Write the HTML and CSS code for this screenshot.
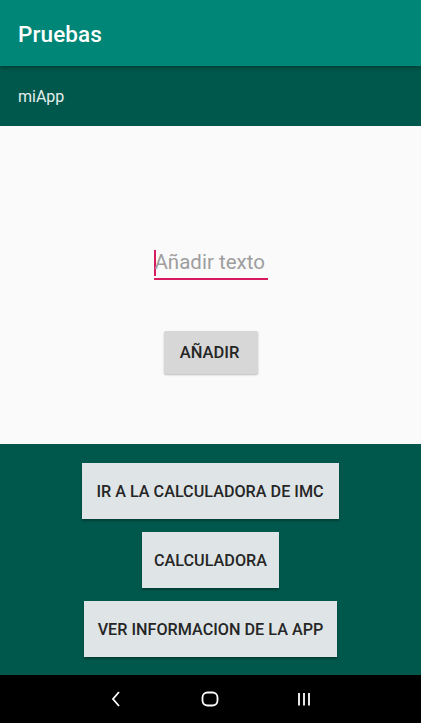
FILE: index.html
```html
<!DOCTYPE html>
<html lang="es">
<head>
<meta charset="utf-8">
<link rel="stylesheet" href="styles.css">
</head>
<body>
<div class="screen">
  <header class="appbar"><h1 class="title">Pruebas</h1></header>
  <div class="band"><span class="band-text">miApp</span></div>
  <main class="content">
    <div class="field">
      <span class="cursor"></span>
      <span class="placeholder">Añadir texto</span>
    </div>
    <button class="btn btn-add">AÑADIR</button>
  </main>
  <section class="actions">
    <button class="btn btn-light btn-imc">IR A LA CALCULADORA DE IMC</button>
    <button class="btn btn-light btn-calc">CALCULADORA</button>
    <button class="btn btn-light btn-info">VER INFORMACION DE LA APP</button>
  </section>
  <nav class="navbar">
    <svg class="nav-icon" width="20" height="20" viewBox="0 0 20 20"><path d="M13 3 L7 10 L13 17" fill="none" stroke="#fff" stroke-width="1.8"/></svg>
    <svg class="nav-icon" width="20" height="20" viewBox="0 0 20 20"><rect x="2.5" y="3.5" width="15" height="13" rx="5" fill="none" stroke="#fff" stroke-width="1.8"/></svg>
    <svg class="nav-icon" width="20" height="20" viewBox="0 0 20 20"><path d="M5 4v12.5M10 4v12.5M15 4v12.5" fill="none" stroke="#fff" stroke-width="1.8"/></svg>
  </nav>
</div>
</body>
</html>
```
FILE: styles.css
```css
* { box-sizing: border-box; }
html, body { margin: 0; padding: 0; }
body { font-family: Roboto, "Noto Sans", sans-serif; background: #000; }
.screen { width: 421px; height: 723px; display: flex; flex-direction: column; }
.appbar {
  height: 66px; background: #008677; display: flex; align-items: center;
  padding-left: 18px; padding-top: 2px; position: relative; z-index: 2;
  box-shadow: 0 2px 4px rgba(0,0,0,0.3);
}
.title { margin: 0; font-size: 22.5px; font-weight: 500; color: #fff; letter-spacing: 0.1px; }
.band { height: 60px; background: #00584C; display: flex; align-items: center; padding-left: 18px; }
.band-text { color: #E6EEEC; font-size: 16px; }
.content {
  height: 318px; background: #FAFAFA; display: flex; flex-direction: column;
  align-items: center; padding-top: 118px;
}
.field {
  position: relative; width: 114px; height: 36px; border-bottom: 2px solid #D81B60;
  display: flex; align-items: center;
}
.cursor { width: 2px; height: 26px; background: #D81B60; margin-top: 4px; }
.placeholder { color: #9E9E9E; font-size: 20.5px; margin-left: -1px; margin-top: 2px; }
.btn {
  border: none; font-family: Roboto, "Noto Sans", sans-serif; font-weight: 500;
  font-size: 16.2px; color: #262626; letter-spacing: 0; padding: 0;
  display: flex; align-items: center; justify-content: center;
}
.btn-add {
  margin-top: 51px; width: 94px; height: 43px; background: #D7D7D7; border-radius: 2px;
  box-shadow: 0 1px 2px rgba(0,0,0,0.25); font-size: 16.5px; padding-right: 2px;
}
.actions {
  height: 231px; background: #00584C; display: flex; flex-direction: column;
  align-items: center; padding-top: 19px; gap: 13px;
}
.btn-light { background: #DFE5E7; height: 56px; box-shadow: 0 2px 2px rgba(0,0,0,0.3); }
.btn-imc { width: 257px; margin-left: -1px; }
.btn-calc { width: 137px; margin-left: 0; }
.btn-info { width: 253px; }
.navbar {
  height: 48px; background: #000; display: flex; justify-content: center; align-items: center; gap: 74px;
  padding-right: 2px;
}
.nav-icon { display: block; }
```
